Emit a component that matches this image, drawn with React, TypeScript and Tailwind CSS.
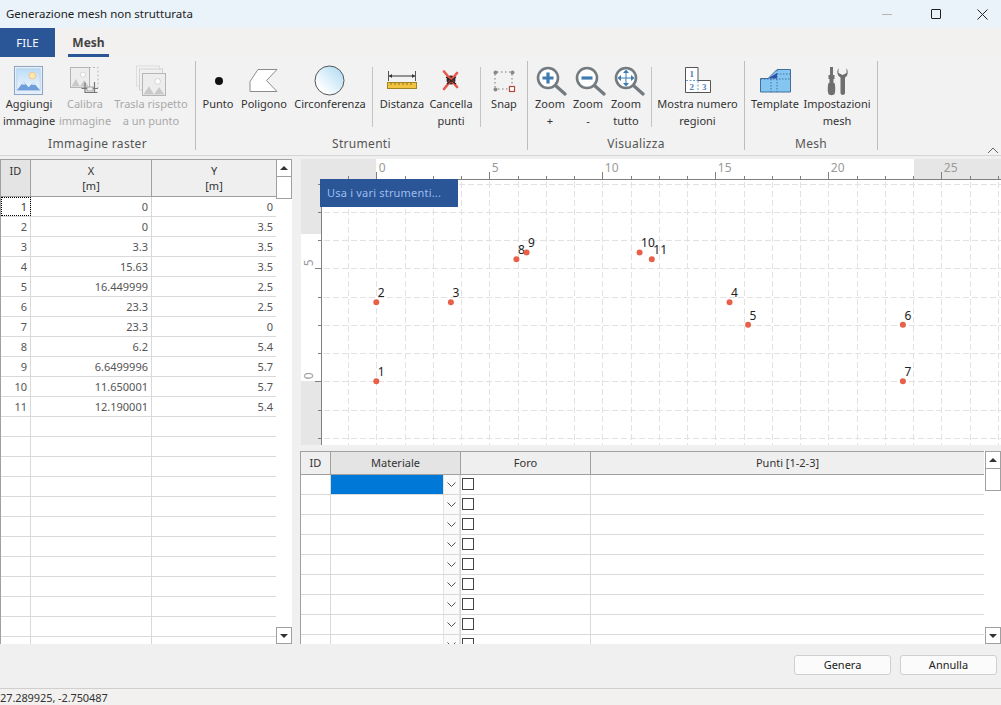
import React from 'react';

const font = '[font-family:"Noto_Sans","Open_Sans",sans-serif]';

const rawPoints = [
  ['0', '0'], ['0', '3.5'], ['3.3', '3.5'], ['15.63', '3.5'], ['16.449999', '2.5'], ['23.3', '2.5'],
  ['23.3', '0'], ['6.2', '5.4'], ['6.6499996', '5.7'], ['11.650001', '5.7'], ['12.190001', '5.4'],
];

const ImageGlyph = ({ x, y, w, h }: { x: number; y: number; w: number; h: number }) => (
  <g>
    <rect x={x} y={y} width={w} height={h} fill="#ededed" stroke="#b5b5b5" />
    <circle cx={x + w * 0.66} cy={y + h * 0.36} r={h * 0.13} fill="#fff" stroke="#c4c4c4" strokeWidth="0.7" />
    <path d={`M${x + 1} ${y + h - 1} L${x + w * 0.28} ${y + h * 0.58} L${x + w * 0.5} ${y + h - 1} L${x + w * 0.72} ${y + h * 0.62} L${x + w - 1} ${y + h - 1} Z`} fill="#c9c9c9" />
  </g>
);

const IconAdd = () => (
  <svg width="31" height="31" viewBox="0 0 32 32" className="mr-[2px] mb-[1px]">
    <rect x="1.5" y="1.5" width="29" height="29" fill="#e4eefa" stroke="#8aa2bd" />
    <defs>
      <linearGradient id="sky" x1="0" y1="0" x2="0" y2="1">
        <stop offset="0" stopColor="#bcdcf8" />
        <stop offset="1" stopColor="#eef6fd" />
      </linearGradient>
    </defs>
    <rect x="4" y="4" width="24" height="22" fill="url(#sky)" stroke="#a8c4e0" strokeWidth="0.6" />
    <circle cx="20" cy="11" r="3.4" fill="#ffe7b0" stroke="#efbd78" strokeWidth="0.8" />
    <path d="M4 26 L11 17 L16 23 L21 18 L28 26 Z" fill="#6f9fdb" />
    <path d="M11 17 L9 20 L13 20 Z M21 18 L19 20.5 L23 20.5 Z" fill="#e8f1fb" />
  </svg>
);

const IconCalibrate = () => (
  <svg width="32" height="32" viewBox="0 0 32 32">
    <rect x="20" y="2.5" width="9" height="20" fill="none" stroke="#b8b8b8" strokeDasharray="2 2" />
    <ImageGlyph x={1.5} y={2.5} w={19} h={20} />
    <path d="M16 17.5 V27.5 H28.5 M12.5 23.5 H29 M25.5 17 V27.5" fill="none" stroke="#777" strokeWidth="1.2" />
    <rect x="18" y="22" width="6" height="4" fill="#eee" stroke="#888" strokeWidth="0.7" />
  </svg>
);

const IconShift = () => (
  <svg width="32" height="32" viewBox="0 0 32 32">
    <rect x="1.5" y="1" width="23" height="20" fill="#f3f3f3" stroke="#dcdcdc" />
    <rect x="4.5" y="4" width="23" height="21" fill="#f0f0f0" stroke="#d2d2d2" />
    <ImageGlyph x={7.5} y={8.5} w={23} h={22} />
  </svg>
);

const IconPoint = () => (
  <svg width="30" height="30" viewBox="0 0 30 30"><circle cx="16" cy="15" r="4" fill="#111" /></svg>
);

const IconPolygon = () => (
  <svg width="30" height="24" viewBox="0 0 30 24">
    <path d="M1 12.5 L9 0.5 H28 L17.5 11.5 L28 22.5 H1 Z" fill="#fff" stroke="#8b8b8b" />
  </svg>
);

const IconCircle = () => (
  <svg width="31" height="31" viewBox="0 0 31 31" className="mr-[2px]">
    <defs>
      <linearGradient id="disc" x1="0" y1="1" x2="1" y2="0">
        <stop offset="0.2" stopColor="#ffffff" />
        <stop offset="1" stopColor="#a8d8f2" />
      </linearGradient>
    </defs>
    <circle cx="15.5" cy="15.5" r="14.5" fill="url(#disc)" stroke="#555" />
  </svg>
);

const IconDistance = () => (
  <svg width="30" height="24" viewBox="0 0 30 24">
    <path d="M1.5 2 V12 M28.5 2 V12" stroke="#555" />
    <path d="M2 7 H28" stroke="#333" />
    <path d="M2 7 L5 5 V9 Z M28 7 L25 5 V9 Z" fill="#333" />
    <rect x="0.5" y="13.5" width="29" height="6" fill="#f2c33f" stroke="#a08423" />
    <path d="M4 14 V16 M8 14 V16 M12 14 V16 M16 14 V16 M20 14 V16 M24 14 V16" stroke="#8b7320" />
  </svg>
);

const IconErase = () => (
  <svg width="20" height="22" viewBox="0 0 20 22">
    <circle cx="10" cy="10" r="4.5" fill="#3b2a2a" />
    <path d="M3 1.5 L16 17 M16 3 L3 19" stroke="#e8584a" strokeWidth="2.6" strokeLinecap="round" />
    <path d="M5 7 L15 14 M15 7 L6 14" stroke="#2c2222" strokeWidth="1.2" />
  </svg>
);

const IconSnap = () => (
  <svg width="24" height="24" viewBox="0 0 24 24">
    <path d="M5 3 H19 M3 5 V19 M20 5 V18 M6 20 H17" stroke="#777" strokeDasharray="1.5 2.5" />
    <circle cx="3.5" cy="3.5" r="2" fill="#888" />
    <circle cx="20.5" cy="3.5" r="2" fill="#888" />
    <circle cx="3.5" cy="20.5" r="2" fill="#888" />
    <rect x="17.5" y="17.5" width="5" height="5" fill="#fff" stroke="#b5483c" strokeWidth="1.2" />
  </svg>
);

const IconZoom = ({ kind }: { kind: 'plus' | 'minus' | 'all' }) => (
  <svg width="32" height="30" viewBox="0 0 32 30" className={kind === 'plus' ? 'ml-[4px]' : kind === 'minus' ? 'ml-[6px]' : 'ml-[8px]'}>
    <circle cx="12" cy="12" r="10" fill="#fff" stroke="#737b80" strokeWidth="2.6" />
    <path d="M19.5 19.5 L29 28" stroke="#737b80" strokeWidth="3.2" strokeLinecap="round" />
    {kind === 'plus' && <path d="M6.5 12 H17.5 M12 6.5 V17.5" stroke="#3d7bb0" strokeWidth="3.2" />}
    {kind === 'minus' && <path d="M6.5 12 H17.5" stroke="#3d7bb0" strokeWidth="3.2" />}
    {kind === 'all' && (
      <g fill="#3d7bb0">
        <path d="M12 3.5 L15 7 H9 Z M12 20.5 L15 17 H9 Z M3.5 12 L7 9 V15 Z M20.5 12 L17 9 V15 Z" />
        <path d="M12 6 V18 M6 12 H18" stroke="#3d7bb0" strokeWidth="1" />
      </g>
    )}
  </svg>
);

const IconRegions = () => (
  <svg width="26" height="27" viewBox="0 0 26 27">
    <path d="M0.5 0.5 H13 V13.5 H25.5 V25.5 H0.5 Z" fill="#fff" stroke="#555" />
    <path d="M1 13.5 H13 M13 14 V25" stroke="#6e9bcf" strokeDasharray="2 1.5" />
    <text x="6.7" y="10" fontSize="9" fontWeight="700" textAnchor="middle" fill="#4f7fb8" fontFamily="Liberation Serif, serif">1</text>
    <text x="6.7" y="23" fontSize="9" fontWeight="700" textAnchor="middle" fill="#4f7fb8" fontFamily="Liberation Serif, serif">2</text>
    <text x="19.2" y="23" fontSize="9" fontWeight="700" textAnchor="middle" fill="#4f7fb8" fontFamily="Liberation Serif, serif">3</text>
  </svg>
);

const IconTemplate = () => (
  <svg width="31" height="24" viewBox="0 0 31 24">
    <path d="M0.5 23 V9.5 H8 L17 0.5 H30.5 V23 Z" fill="#85c5f2" stroke="#3f6f9a" />
    <path d="M8 9.5 L17 4 V9.5 Z" fill="#2f4fa8" />
    <path d="M17 5 H30 M17 1 V23 M11 10 V23 M1 10 H30" stroke="#2f5f8f" strokeWidth="0.8" strokeDasharray="1.5 1.5" fill="none" />
  </svg>
);

const IconTools = () => (
  <svg width="22" height="30" viewBox="0 0 22 30">
    <path d="M4 1 H7 V9 H8.5 V13 H7.5 V17 H8.5 C9.5 20 9.5 26 8.5 28 C8 29.5 3 29.5 2.5 28 C1.5 26 1.5 20 2.5 17 H3.5 V13 H2.5 V9 H4 Z" fill="#6f6f6f" />
    <path d="M12.5 2 C10.5 5 11 10 14.5 11.5 V27 C14.5 29.5 19 29.5 19 27 V11.5 C22 10 22.5 5 20.5 2 V7 L16.7 9 L12.5 7 Z" fill="#6f6f6f" />
  </svg>
);

type BtnProps = { w: string; icon: React.ReactNode; line1: string; line2?: string; disabled?: boolean };

const RibbonBtn = ({ w, icon, line1, line2, disabled }: BtnProps) => (
  <div className={`${w} flex shrink-0 flex-col items-center`}>
    <div className="flex h-[38px] items-center justify-center pt-[1px]">{icon}</div>
    <div className={`-mt-[4px] text-center text-[11px] leading-[17px] whitespace-nowrap ${disabled ? 'text-[#a9a9a9]' : 'text-[#333333]'}`}>
      <div>{line1}</div>
      <div>{line2 || '\u00a0'}</div>
    </div>
  </div>
);

const SubSep = ({ ml }: { ml: string }) => <div className={`${ml} mt-[6px] h-[60px] w-px shrink-0 bg-[#c4c4c4]`} />;

const Group = ({ w, label, pl, children }: { w: string; label: string; pl: string; children: React.ReactNode }) => (
  <div className={`${w} flex h-full shrink-0 flex-col border-r border-[#bdbdbd]`}>
    <div className={`${pl} flex h-[75px] shrink-0`}>{children}</div>
    <div className="shrink-0 text-center text-[12px] leading-[16px] tracking-[0.3px] text-[#555555]">{label}</div>
  </div>
);

const ScrollBtn = ({ up, h }: { up?: boolean; h: string }) => (
  <div className={`${h} flex w-[16px] items-center justify-center border border-[#a0a0a0] bg-white`}>
    <div className={`h-0 w-0 border-x-[4px] border-x-transparent ${up ? 'border-b-[4px] border-b-[#333333]' : 'border-t-[4px] border-t-[#333333]'}`} />
  </div>
);

const Scrollbar = () => (
  <div className="flex h-full w-[16px] shrink-0 flex-col bg-white">
    <ScrollBtn up h="h-[18px]" />
    <div className="h-[22px] w-[16px] border border-t-0 border-[#a0a0a0] bg-white" />
    <div className="flex-1" />
    <ScrollBtn h="h-[17px]" />
  </div>
);

const leftRows = Array.from({ length: 23 }, (_, i) => rawPoints[i] || null);

const PointsTable = () => (
  <div className="flex h-full w-[292px] shrink-0 bg-white">
    <div className="h-full w-[276px] overflow-hidden border-l border-[#a0a0a0]">
      <div className="flex h-[38px] border-y border-[#a0a0a0] text-center text-[11px] leading-[15px] text-[#333333]">
        <div className="w-[30px] shrink-0 border-r border-[#a0a0a0] bg-[#e4e4e4] pt-[3px]">ID</div>
        <div className="w-[121px] shrink-0 border-r border-[#a0a0a0] bg-[#efefef] pt-[3px]">X<br />[m]</div>
        <div className="w-[124px] shrink-0 bg-[#efefef] pt-[3px]">Y<br />[m]</div>
      </div>
      {leftRows.map((row, i) => (
        <div key={i} className="flex h-[20px] border-b border-[#d9d9d9] text-right text-[11px] leading-[19px] text-[#555555]">
          <div className={`w-[30px] shrink-0 border-r border-[#d9d9d9] pr-[3px] ${i === 0 ? 'text-[#333333] outline-1 -outline-offset-1 outline-black outline-dotted' : ''}`}>{row ? i + 1 : ''}</div>
          <div className="w-[121px] shrink-0 border-r border-[#d9d9d9] pr-[3px]">{row ? row[0] : ''}</div>
          <div className="w-[124px] shrink-0 pr-[3px]">{row ? row[1] : ''}</div>
        </div>
      ))}
    </div>
    <Scrollbar />
  </div>
);

const RegionsTable = () => (
  <div className="flex h-full bg-white">
    <div className="h-full min-w-0 flex-1 overflow-hidden border-l border-[#a0a0a0]">
      <div className="flex h-[24px] border-y border-[#a0a0a0] text-center text-[11px] leading-[21px] text-[#333333]">
        <div className="w-[30px] shrink-0 border-r border-[#a0a0a0] bg-[#efefef]">ID</div>
        <div className="w-[130px] shrink-0 border-r border-[#a0a0a0] bg-[#e4e4e4]">Materiale</div>
        <div className="w-[130px] shrink-0 border-r border-[#a0a0a0] bg-[#efefef]">Foro</div>
        <div className="flex-1 bg-[#efefef]">Punti [1-2-3]</div>
      </div>
      {Array.from({ length: 9 }, (_, i) => (
        <div key={i} className="flex h-[20px] border-b border-[#d9d9d9]">
          <div className="w-[30px] shrink-0 border-r border-[#d9d9d9]" />
          <div className="flex w-[130px] shrink-0 border-r border-[#d9d9d9]">
            <div className={`flex-1 ${i === 0 ? 'bg-[#0078d7]' : ''}`} />
            <div className="flex w-[17px] items-center justify-center border-x border-[#e4e4e4] bg-[#fafafa]">
              <svg width="9" height="5" viewBox="0 0 9 5"><path d="M0.5 0.5 L4.5 4.5 L8.5 0.5" fill="none" stroke="#555" /></svg>
            </div>
          </div>
          <div className="flex w-[130px] shrink-0 items-start border-r border-[#d9d9d9] pt-[3px] pl-[1px]">
            <div className="h-[12px] w-[12px] border border-[#444444] bg-white" />
          </div>
          <div className="flex-1" />
        </div>
      ))}
    </div>
    <div className="w-px bg-white" />
    <Scrollbar />
  </div>
);

const X0 = 376.3;
const Y0 = 381.3;
const UNIT = 22.6;
const STEP = 28.25;
const xs = Array.from({ length: 24 }, (_, i) => X0 + (i - 1) * STEP);
const ys = Array.from({ length: 11 }, (_, i) => Y0 + (2 - i) * STEP);

const Plot = () => (
  <div className="relative h-[286px] w-[700px] shrink-0 overflow-hidden bg-white">
    <svg width="700" height="286" viewBox="301 159 700 286" className="block">
      <rect x="301" y="159" width="75" height="20" fill="#e6e6e6" />
      <rect x="914" y="159" width="87" height="20" fill="#e6e6e6" />
      <rect x="301" y="159" width="20" height="75" fill="#e6e6e6" />
      <rect x="301" y="381" width="20" height="64" fill="#e6e6e6" />
      {xs.map((x, i) => {
        const px = Math.round(x) + 0.5;
        const major = (i - 1) % 4 === 0;
        return (
          <g key={i} shapeRendering="crispEdges">
            <path d={`M${px} 182 V445`} stroke="#e2e2e2" strokeDasharray="6 3" />
            <path d={`M${px} ${major ? 172 : 176} V179`} stroke="#808080" />
          </g>
        );
      })}
      {ys.map((y, i) => {
        const py = Math.round(y) + 0.5;
        const major = (i - 2) % 4 === 0;
        return (
          <g key={i} shapeRendering="crispEdges">
            <path d={`M324 ${py} H1001`} stroke="#e2e2e2" strokeDasharray="6 3" />
            <path d={`M${major ? 315 : 318} ${py} H321`} stroke="#808080" />
          </g>
        );
      })}
      <path d="M321 179.5 H1001 M321.5 179 V445" stroke="#808080" shapeRendering="crispEdges" />
      {[0, 5, 10, 15, 20, 25].map((n) => (
        <text key={n} x={X0 + n * UNIT + 2.5} y={172} fontSize="12" fill="#9a9a9a" fontFamily="Noto Sans, sans-serif">{n}</text>
      ))}
      {[0, 5].map((n) => (
        <text key={n} x={0} y={0} fontSize="12" fill="#9a9a9a" fontFamily="Noto Sans, sans-serif" transform={`translate(313 ${Y0 - n * UNIT - 2}) rotate(-90)`}>{n}</text>
      ))}
      {rawPoints.map(([x, y], i) => {
        const cx = X0 + parseFloat(x) * UNIT;
        const cy = Y0 - parseFloat(y) * UNIT;
        return (
          <g key={i}>
            <circle cx={cx} cy={cy} r="3" fill="#e8604a" />
            <text x={cx + 1.5} y={cy - 5} fontSize="12" fill="#222222" fontFamily="Noto Sans, sans-serif">{i + 1}</text>
          </g>
        );
      })}
    </svg>
    <div className="absolute top-[20px] left-[19px] h-[28px] w-[138px] bg-[#2a5597] pl-[7px] text-[11px] leading-[28px] tracking-[0.2px] text-[#9dbdf0]">Usa i vari strumenti...</div>
  </div>
);

export default function App() {
  return (
    <div className={`${font} flex h-[705px] w-[1001px] flex-col overflow-hidden bg-[#f0f0f0] text-[#222222]`}>
      <div className="flex h-[28px] shrink-0 items-center bg-[#e9f3f9] pl-[6px] text-[11.5px]">
        <span>Generazione mesh non strutturata</span>
        <div className="ml-auto flex items-center">
          <div className="mr-[39px] h-px w-[10px] bg-[#b5b5b5]" />
          <div className="mr-[36px] h-[10px] w-[10px] rounded-[1px] border border-[#222222]" />
          <svg width="11" height="11" viewBox="0 0 11 11" className="mr-[13px]"><path d="M0.5 0.5 L10.5 10.5 M10.5 0.5 L0.5 10.5" stroke="#222" /></svg>
        </div>
      </div>

      <div className="flex h-[29px] shrink-0 bg-[#f2f1f0]">
        <div className="h-full w-[55px] bg-[#2a5597] text-center text-[11.5px] leading-[30px] text-white">FILE</div>
        <div className="ml-[13px] h-full w-[41px] border-b-[3px] border-[#2a5597] text-center text-[12px] leading-[30px] font-bold text-[#444444]">Mesh</div>
      </div>

      <div className="relative flex h-[99px] shrink-0 border-b border-[#d5d5d5] bg-[#f2f2f2] pt-[4px] pb-[5px]">
        <Group w="w-[196px]" label="Immagine raster" pl="pl-[1px]">
          <RibbonBtn w="w-[56px]" icon={<IconAdd />} line1="Aggiungi" line2="immagine" />
          <RibbonBtn w="w-[56px]" icon={<IconCalibrate />} line1="Calibra" line2="immagine" disabled />
          <RibbonBtn w="w-[76px]" icon={<IconShift />} line1="Trasla rispetto" line2="a un punto" disabled />
        </Group>
        <Group w="w-[332px]" label="Strumenti" pl="pl-[5px]">
          <RibbonBtn w="w-[34px]" icon={<IconPoint />} line1="Punto" />
          <RibbonBtn w="w-[58px]" icon={<IconPolygon />} line1="Poligono" />
          <RibbonBtn w="w-[74px]" icon={<IconCircle />} line1="Circonferenza" />
          <SubSep ml="ml-[5px]" />
          <RibbonBtn w="w-[58px]" icon={<IconDistance />} line1="Distanza" />
          <RibbonBtn w="w-[40px]" icon={<IconErase />} line1="Cancella" line2="punti" />
          <SubSep ml="ml-[9px]" />
          <RibbonBtn w="w-[46px]" icon={<IconSnap />} line1="Snap" />
        </Group>
        <Group w="w-[217px]" label="Visualizza" pl="pl-[3px]">
          <RibbonBtn w="w-[38px]" icon={<IconZoom kind="plus" />} line1="Zoom" line2="+" />
          <RibbonBtn w="w-[38px]" icon={<IconZoom kind="minus" />} line1="Zoom" line2="-" />
          <RibbonBtn w="w-[38px]" icon={<IconZoom kind="all" />} line1="Zoom" line2="tutto" />
          <SubSep ml="ml-[6px]" />
          <RibbonBtn w="w-[91px]" icon={<IconRegions />} line1="Mostra numero" line2="regioni" />
        </Group>
        <Group w="w-[133px]" label="Mesh" pl="pl-[3px]">
          <RibbonBtn w="w-[54px]" icon={<IconTemplate />} line1="Template" />
          <RibbonBtn w="w-[70px]" icon={<IconTools />} line1="Impostazioni" line2="mesh" />
        </Group>
        <svg width="12" height="7" viewBox="0 0 12 7" className="absolute right-[2px] bottom-[1px]"><path d="M1 6 L6 1 L11 6" fill="none" stroke="#666" /></svg>
      </div>

      <div className="flex h-[488px] shrink-0 pt-[3px]">
        <PointsTable />
        <div className="w-[9px] shrink-0" />
        <div className="flex min-w-0 flex-1 flex-col">
          <Plot />
          <div className="h-[6px] shrink-0" />
          <div className="-ml-[1px] min-h-0 flex-1"><RegionsTable /></div>
        </div>
      </div>

      <div className="flex h-[45px] shrink-0 items-start justify-end gap-[9px] border-b border-[#cfcfcf] pt-[11px] pr-[4px]">
        <button className="h-[20px] w-[97px] rounded-[3px] border border-[#cfcfcf] bg-[#fbfbfb] text-[11px] leading-[18px] text-[#222222]">Genera</button>
        <button className="h-[20px] w-[97px] rounded-[3px] border border-[#cfcfcf] bg-[#fbfbfb] text-[11px] leading-[18px] text-[#222222]">Annulla</button>
      </div>

      <div className="flex-1 bg-[#f2f1f0] text-[11px] leading-[18px] tracking-[-0.1px] text-[#333333]">27.289925, -2.750487</div>
    </div>
  );
}
